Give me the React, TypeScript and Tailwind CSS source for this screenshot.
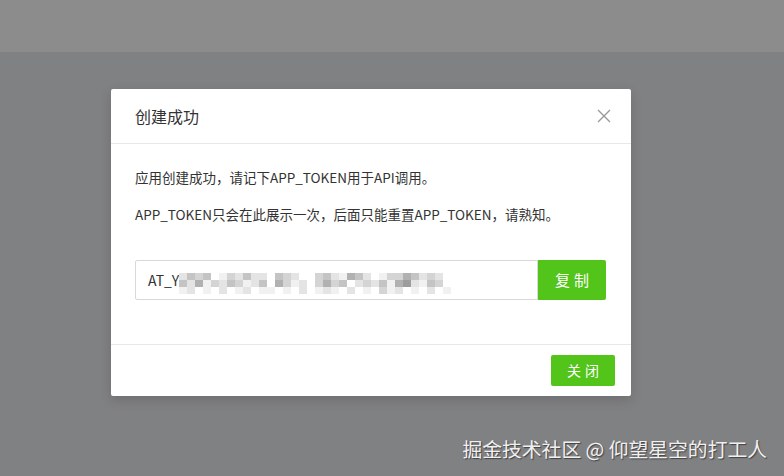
const SHADES = [
  'bg-white',
  'bg-[#f1f1f1]',
  'bg-[#e4e4e4]',
  'bg-[#d4d4d4]',
  'bg-[#c4c4c4]',
  'bg-[#b1b1b1]',
  'bg-[#9d9d9d]',
];

// mosaic over the hidden token
const MOSAIC = [
  '2434013242204320034215420133542320',
  '4251324312405312035340232415621430',
  '1201020120110102012102010312010201',
];

function Mosaic() {
  return (
    <div className="flex flex-col">
      {MOSAIC.map((row, i) => (
        <div key={i} className="flex">
          {row.split('').map((c, j) => (
            <div key={j} className={`w-[8px] h-[7px] ${SHADES[Number(c)]}`} />
          ))}
        </div>
      ))}
    </div>
  );
}

export default function App() {
  return (
    <div className="relative w-[784px] h-[476px] overflow-hidden bg-[#808183] font-['Noto_Sans_CJK_SC',sans-serif]">
      <div className="h-[52px] bg-[#8c8c8c]" />

      <div className="pl-[111px] pt-[37px]">
        <div className="w-[520px] bg-white rounded-[2px] shadow-[0_4px_12px_rgba(0,0,0,0.15)]">
          {/* header */}
          <div className="h-[55px] flex items-center justify-between pl-[24px] pr-[20px] border-b border-[#e8e8e8]">
            <span className="text-[16px] text-[#333]">创建成功</span>
            <svg width="14" height="14" viewBox="0 0 14 14" className="text-[#999]">
              <path d="M1 1 L13 13 M13 1 L1 13" stroke="currentColor" strokeWidth="1.4" />
            </svg>
          </div>

          {/* body */}
          <div className="h-[200px] px-[24px] pt-[23px] text-[13.5px] text-[#333]">
            <p className="leading-[20px]">应用创建成功，请记下APP_TOKEN用于API调用。</p>
            <p className="leading-[20px] mt-[17px]">APP_TOKEN只会在此展示一次，后面只能重置APP_TOKEN，请熟知。</p>
            <div className="mt-[36px] flex w-[471px] h-[40px]">
              <div className="flex-1 flex items-center pl-[12px] border border-[#d9d9d9] rounded-l-[2px] text-[14px] text-[#333]">
                <span>AT_Y</span>
                <div className="mt-[6px]">
                  <Mosaic />
                </div>
              </div>
              <button className="w-[68px] bg-[#52c41a] text-white text-[15px] tracking-[4px] pl-[4px] rounded-r-[2px]">
                复制
              </button>
            </div>
          </div>

          {/* footer */}
          <div className="h-[52px] flex items-center justify-end pr-[16px] border-t border-[#e8e8e8]">
            <button className="w-[64px] h-[31px] bg-[#52c41a] text-white text-[14px] tracking-[4px] pl-[4px] rounded-[2px]">
              关闭
            </button>
          </div>
        </div>
      </div>

      <div className="absolute right-[17px] bottom-[12px] text-[19.8px] text-[#f0f0f0] [text-shadow:1px_1px_1px_rgba(0,0,0,0.5)]">
        掘金技术社区 @ 仰望星空的打工人
      </div>
    </div>
  );
}
